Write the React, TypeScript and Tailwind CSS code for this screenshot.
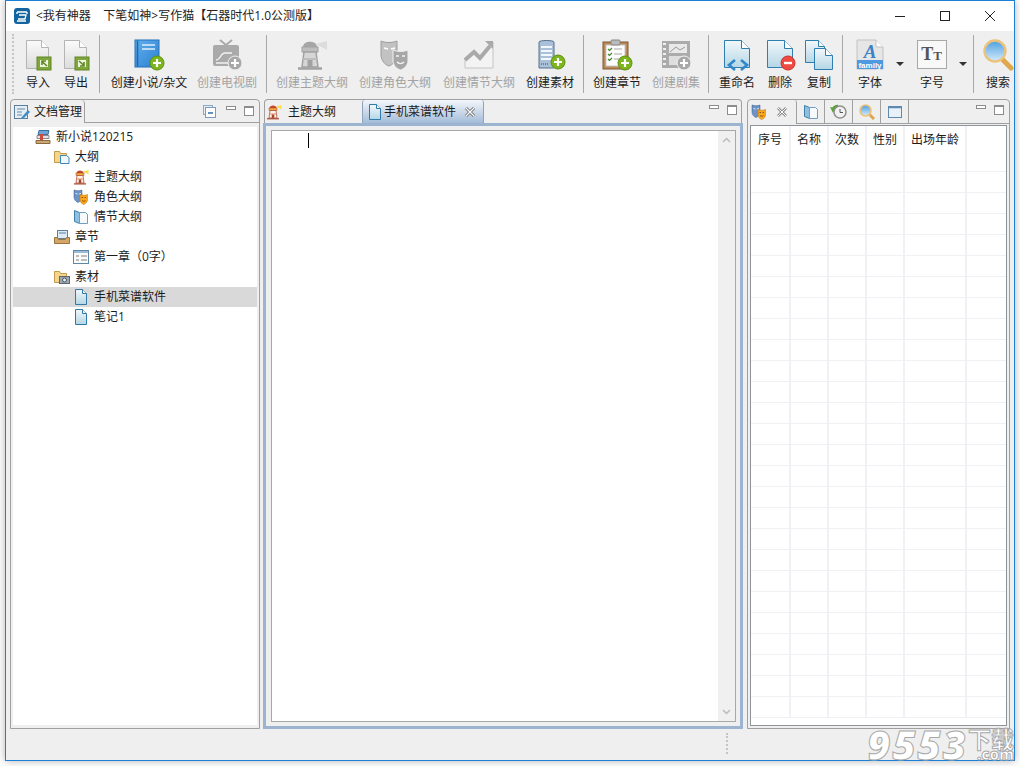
import React from "react";

const Defs = () => (
  <svg className="absolute w-0 h-0">
    <defs>
      <linearGradient id="page" x1="0" y1="0" x2="0" y2="1">
        <stop offset="0" stopColor="#fbfbfb" />
        <stop offset="1" stopColor="#dcdcdc" />
      </linearGradient>
      <linearGradient id="blueDoc" x1="0" y1="0" x2="0" y2="1">
        <stop offset="0" stopColor="#f2f8fb" />
        <stop offset="1" stopColor="#b5d6e6" />
      </linearGradient>
      <linearGradient id="book" x1="0" y1="0" x2="1" y2="1">
        <stop offset="0" stopColor="#5fb0ee" />
        <stop offset="1" stopColor="#2d7fd0" />
      </linearGradient>
      <linearGradient id="glass" x1="0" y1="0" x2="0" y2="1">
        <stop offset="0" stopColor="#4c9fe0" />
        <stop offset="1" stopColor="#d5ecfa" />
      </linearGradient>
    </defs>
  </svg>
);

const Plus = ({ x, y, gray }: { x: number; y: number; gray?: boolean }) => (
  <g>
    <circle cx={x} cy={y} r="7" fill={gray ? "#a8a8a8" : "#7db51c"} stroke={gray ? "#f0f0f0" : "#5d8f12"} />
    <path d={`M${x - 4} ${y}h8M${x} ${y - 4}v8`} stroke="#fff" strokeWidth="2.2" />
  </g>
);

const ArrowPage = ({ out }: { out?: boolean }) => (
  <svg className="w-[32px] h-[32px]" viewBox="0 0 32 32">
    <path d="M4.500 1.500h15l7 7v21h-22z" fill="url(#page)" stroke="#b4b4b4" />
    <path d="M19.500 1.500v7h7" fill="#fff" stroke="#b4b4b4" />
    <rect x="15" y="18" width="14" height="13" fill="#7fa63a" stroke="#5f8528" />
    <rect x="18" y="21" width="8" height="7" fill="#eef5dd" />
    <path d={out ? "M19 22l5 4.500M24 23v4h-4" : "M25 27l-5-4.500M20 26v-4h4"} stroke="#5f8528" strokeWidth="1.600" fill="none" />
  </svg>
);

const NewBook = () => (
  <svg className="w-[32px] h-[32px]" viewBox="0 0 32 32">
    <rect x="2" y="1" width="24" height="27" fill="url(#book)" stroke="#2470b8" />
    <path d="M4.500 1.500v26" stroke="#1f66aa" strokeWidth="1.500" />
    <path d="M9 6h13M9 10h13" stroke="#dff0fc" strokeWidth="1.500" />
    <Plus x={24} y={24} />
  </svg>
);

const Tv = () => (
  <svg className="w-[32px] h-[32px]" viewBox="0 0 32 32">
    <path d="M9 1l6 5 6-5" stroke="#a9a9a9" strokeWidth="2" fill="none" />
    <rect x="2" y="6" width="26" height="21" rx="2" fill="#aaaaaa" />
    <path d="M5 21c5 0 4-7 9-7h7M5 24h14" stroke="#f2f2f2" strokeWidth="1.300" fill="none" />
    <Plus x={24} y={24} gray />
  </svg>
);

const Lighthouse = ({ gray }: { gray?: boolean }) => {
  const body = gray ? "#d6d6d6" : "#fbf3e8";
  const line = gray ? "#a2a2a2" : "#a8482f";
  const top = gray ? "#a6a6a6" : "#c9452a";
  return (
    <svg className="w-full h-full" viewBox="0 0 32 32">
      <path d="M20 5l11-3v9z" fill={gray ? "#dcdcdc" : "#f8e04f"} />
      <path d="M7 8c0-7 14-7 14 0z" fill={top} />
      <rect x="6" y="8" width="16" height="5" fill={gray ? "#bdbdbd" : "#f2a93b"} stroke={line} />
      <path d="M8 13h12l2 15H6z" fill={body} stroke={line} strokeWidth="1.500" />
      <path d="M7 20h14" stroke={gray ? "#bdbdbd" : "#e68a6a"} strokeWidth="2" />
      <rect x="11.500" y="21" width="5" height="7" fill={line} />
      <path d="M2 29.500h24" stroke={line} strokeWidth="2.500" />
    </svg>
  );
};

const Masks = ({ gray }: { gray?: boolean }) => (
  <svg className="w-full h-full" viewBox="0 0 32 32">
    <path d="M2 2c5 2 11 2 16 0v14c0 6-5 10-8 11-4-1-8-6-8-11z" fill={gray ? "#c2c2c2" : "#6d94c8"} stroke={gray ? "#9d9d9d" : "#34588a"} />
    <path d="M5 9l4 1M12 10l4-1" stroke="#fff" strokeWidth="1.600" />
    <path d="M14 11c5 2 10 2 15 0v11c0 4-4 8-7.500 9-4-1-7.500-5-7.500-9z" fill={gray ? "#a7a7a7" : "#f9a81e"} stroke={gray ? "#f0f0f0" : "#b86f14"} />
    <path d="M17 17h3M23 17h3M18 23c2 2 5 2 7 0" stroke={gray ? "#f4f4f4" : "#70400c"} strokeWidth="1.600" fill="none" />
  </svg>
);

const Chart = () => (
  <svg className="w-[32px] h-[32px]" viewBox="0 0 32 32">
    <path d="M2 29V19l9-7 6 5L30 3v26z" fill="#f3f3f3" stroke="#c4c4c4" />
    <path d="M2 21l9-8 6 6L27 7" stroke="#a9a9a9" strokeWidth="4" fill="none" />
    <path d="M22 2h8v8z" fill="#a9a9a9" />
  </svg>
);

const Server = () => (
  <svg className="w-[32px] h-[32px]" viewBox="0 0 32 32">
    <path d="M5 3c0-2 15-2 15 0v26H5z" fill="#a9c0d8" stroke="#54708f" />
    <path d="M7 8h11M7 12h11M7 16h11M7 20h11" stroke="#f2f7fb" strokeWidth="2" />
    <path d="M7 25h8" stroke="#6d8299" strokeWidth="2" strokeDasharray="1 1" />
    <Plus x={24} y={23} />
  </svg>
);

const Clipboard = () => (
  <svg className="w-[32px] h-[32px]" viewBox="0 0 32 32">
    <rect x="2" y="3" width="25" height="27" fill="#b98958" stroke="#7f5a34" />
    <rect x="5" y="6" width="19" height="21" fill="#fdfdfd" stroke="#c9c9c9" />
    <rect x="10" y="1" width="9" height="5" rx="1" fill="#bbbbbb" stroke="#868686" />
    <path d="M7 10l1.500 1.500L11 9M7 15l1.500 1.500L11 14M7 20l1.500 1.500L11 19" stroke="#3f8a2a" fill="none" strokeWidth="1.200" />
    <path d="M13 10h8M13 15h8M13 20h5" stroke="#a7a7a7" />
    <Plus x={24} y={24} />
  </svg>
);

const Film = () => (
  <svg className="w-[32px] h-[32px]" viewBox="0 0 32 32">
    <rect x="2" y="2" width="28" height="27" fill="#ababab" />
    <path d="M3 5h3M3 10h3M3 15h3M3 20h3M3 25h3" stroke="#f0f0f0" strokeWidth="2" />
    <rect x="9" y="5" width="18" height="9" fill="#e9e9e9" />
    <rect x="9" y="17" width="18" height="9" fill="#dedede" />
    <path d="M10 13l6-5 4 3 5-3" stroke="#9a9a9a" fill="none" />
    <Plus x={24} y={24} gray />
  </svg>
);

const BlueDoc = () => (
  <>
    <path d="M3.500 1.500h17l8 8v19h-25z" fill="url(#blueDoc)" stroke="#2e7fb0" />
    <path d="M20.500 1.500v8h8" fill="#fff" stroke="#2e7fb0" />
  </>
);

const Rename = () => (
  <svg className="w-[32px] h-[32px]" viewBox="0 0 32 32">
    <BlueDoc />
    <path d="M14 21l-6 5 6 5M20 21l6 5-6 5" stroke="#2f86c8" strokeWidth="2.600" fill="none" />
  </svg>
);

const DeleteDoc = () => (
  <svg className="w-[32px] h-[32px]" viewBox="0 0 32 32">
    <BlueDoc />
    <circle cx="24" cy="24" r="7" fill="#ef4b43" stroke="#c9322b" />
    <path d="M20 24h8" stroke="#fff" strokeWidth="2.400" />
  </svg>
);

const CopyDoc = () => (
  <svg className="w-[32px] h-[32px]" viewBox="0 0 32 32">
    <path d="M2.500 1.500h13l6 6v16h-19z" fill="url(#blueDoc)" stroke="#2e7fb0" />
    <path d="M15.500 1.500v6h6" fill="#fff" stroke="#2e7fb0" />
    <path d="M11.500 9.500h11l7 7v14h-18z" fill="url(#blueDoc)" stroke="#2e7fb0" />
    <path d="M22.500 9.500v7h7" fill="#fff" stroke="#2e7fb0" />
  </svg>
);

const FontIcon = () => (
  <svg className="w-[32px] h-[32px]" viewBox="0 0 32 32">
    <path d="M3 1h19l7 7v22H3z" fill="#e6e6e6" stroke="#c2c2c2" />
    <path d="M22 1v7h7" fill="#fff" stroke="#c2c2c2" />
    <text x="16" y="19" textAnchor="middle" fontSize="19" fontWeight="700" fontStyle="italic" fontFamily="Liberation Serif" fill="#3b82c8">A</text>
    <rect x="3" y="21" width="26" height="9" fill="#4d9ae0" />
    <text x="16" y="28.500" textAnchor="middle" fontSize="8" fontWeight="700" fontFamily="Liberation Sans" fill="#fff">family</text>
  </svg>
);

const SizeIcon = () => (
  <svg className="w-[32px] h-[32px]" viewBox="0 0 32 32">
    <rect x="1.500" y="1.500" width="29" height="28" fill="#f8f8f8" stroke="#a8a8a8" />
    <text x="15.500" y="21" textAnchor="middle" fontSize="18" fontWeight="700" fontFamily="Liberation Serif" fill="#555">
      T<tspan fontSize="13">T</tspan>
    </text>
  </svg>
);

const Search = () => (
  <svg className="w-[32px] h-[32px]" viewBox="0 0 32 32">
    <path d="M20 20l9 9" stroke="#e0a84c" strokeWidth="5" strokeLinecap="round" />
    <circle cx="13" cy="12" r="10.500" fill="url(#glass)" stroke="#edc27a" strokeWidth="2.400" />
  </svg>
);

const tools = [
  { w: "w-[38px]", label: "导入", icon: <ArrowPage /> },
  { w: "w-[38px]", label: "导出", icon: <ArrowPage out /> },
  { sep: "w-[8px]" },
  { w: "w-[92px]", label: "创建小说/杂文", icon: <NewBook /> },
  { w: "w-[64px]", label: "创建电视剧", icon: <Tv />, off: true },
  { sep: "w-[14px]" },
  { w: "w-[78px]", label: "创建主题大纲", icon: <div className="w-[32px] h-[32px]"><Lighthouse gray /></div>, off: true },
  { w: "w-[88px]", label: "创建角色大纲", icon: <div className="w-[32px] h-[32px]"><Masks gray /></div>, off: true },
  { w: "w-[80px]", label: "创建情节大纲", icon: <Chart />, off: true },
  { w: "w-[62px]", label: "创建素材", icon: <Server /> },
  { sep: "w-[4px]" },
  { w: "w-[64px]", label: "创建章节", icon: <Clipboard /> },
  { w: "w-[54px]", label: "创建剧集", icon: <Film />, off: true },
  { sep: "w-[10px]" },
  { w: "w-[48px]", label: "重命名", icon: <Rename /> },
  { w: "w-[38px]", label: "删除", icon: <DeleteDoc /> },
  { w: "w-[40px]", label: "复制", icon: <CopyDoc /> },
  { sep: "w-[6px]" },
  { w: "w-[50px]", label: "字体", icon: <FontIcon /> },
  { caret: "w-[10px]" },
  { w: "w-[54px]", label: "字号", icon: <SizeIcon /> },
  { caret: "w-[8px]" },
  { sep: "w-[12px]" },
  { w: "w-[38px]", label: "搜索", icon: <Search /> },
];

const Toolbar = () => (
  <div className="h-[66px] bg-[#efefef] flex overflow-hidden shrink-0">
    <div className="w-[13px] shrink-0 pl-[6px] py-[3px]">
      <div className="h-full border-l-2 border-dotted border-[#c4c4c4]" />
    </div>
    {tools.map((t, i) => {
      if (t.sep) {
        return (
          <div key={i} className={`${t.sep} shrink-0 flex justify-center py-[4px]`}>
            <div className="w-px bg-[#a8a8a8]" />
          </div>
        );
      }
      if (t.caret) {
        return (
          <div key={i} className={`${t.caret} shrink-0 flex justify-center pt-[31px]`}>
            <div className="w-0 h-0 border-x-[4px] border-x-transparent border-t-[4px] border-t-[#333]" />
          </div>
        );
      }
      return (
        <div key={i} className={`${t.w} shrink-0 flex flex-col items-center pt-[8px]`}>
          <div className="h-[32px] flex justify-center">{t.icon}</div>
          <div className={`mt-[4px] text-[12px] leading-[16px] whitespace-nowrap ${t.off ? "text-[#a3a3a3]" : "text-[#1c1c1c]"}`}>{t.label}</div>
        </div>
      );
    })}
  </div>
);

const MinMax = () => (
  <div className="flex items-start gap-[8px]">
    <div className="w-[10px] h-[4px] border border-[#8c8c8c] bg-white mt-[1px]" />
    <div className="w-[10px] h-[10px] border border-[#8c8c8c] border-t-2 bg-white mt-[1px]" />
  </div>
);

const SmallDoc = () => (
  <svg className="w-[16px] h-[16px]" viewBox="0 0 16 16">
    <path d="M2.500 .5h7l4 4v11h-11z" fill="url(#blueDoc)" stroke="#2f7aa8" />
    <path d="M9.500 .5v4h4" fill="#fff" stroke="#2f7aa8" />
  </svg>
);

const SmallBook = () => (
  <svg className="w-[16px] h-[16px]" viewBox="0 0 16 16">
    <path d="M1.500 1.500l5 2v11l-5-2z" fill="#8fc0e2" stroke="#3f7fab" />
    <path d="M6.500 3.500h6l2 2v9h-8z" fill="#f6fafc" stroke="#6e9fc0" />
  </svg>
);

const RootIcon = () => (
  <svg className="w-[16px] h-[16px]" viewBox="0 0 16 16">
    <path d="M4 1.500h10l-1 4H3z" fill="#6ea3d6" stroke="#3b6f9f" />
    <path d="M2 6.500h12v3H2z" fill="#e4e4e4" stroke="#8a8a8a" />
    <rect x="5" y="5" width="3" height="6" fill="#cf4a3a" />
    <path d="M1 11.500h14v3H1z" fill="#c9a777" stroke="#8a6a3d" />
  </svg>
);

const FolderDoc = () => (
  <svg className="w-[16px] h-[16px]" viewBox="0 0 16 16">
    <path d="M.5 2.500h5l1 2h6v9H.5z" fill="#f5d58a" stroke="#c39a4a" />
    <path d="M6.500 6.500h6l2.500 2v6h-8.500z" fill="#eef7fc" stroke="#3f86b5" />
  </svg>
);

const Tray = () => (
  <svg className="w-[16px] h-[16px]" viewBox="0 0 16 16">
    <rect x="3.500" y="1.500" width="10" height="8" fill="#dbeaf5" stroke="#5b7f9c" />
    <path d="M5 4h7" stroke="#5b7f9c" />
    <path d="M.5 8.500h3l1 2h7l1-2h3v6H.5z" fill="#d4a768" stroke="#9b7540" />
  </svg>
);

const Form = () => (
  <svg className="w-[16px] h-[16px]" viewBox="0 0 16 16">
    <rect x=".5" y="1.500" width="15" height="13" fill="#fafafa" stroke="#5f87a8" />
    <path d="M1 3h14" stroke="#9dbdd6" strokeWidth="2" />
    <path d="M3 7h3M8 7h6M3 11h3M8 11h6" stroke="#a8a8a8" strokeWidth="1.400" />
  </svg>
);

const FolderCam = () => (
  <svg className="w-[16px] h-[16px]" viewBox="0 0 16 16">
    <path d="M.5 2.500h5l1 2h6v9H.5z" fill="#f5d58a" stroke="#c39a4a" />
    <rect x="5.500" y="7.500" width="10" height="7" fill="#9fa8b0" stroke="#5d666e" />
    <circle cx="10.500" cy="11" r="2" fill="#dff0fa" stroke="#4a5258" />
  </svg>
);

const tree = [
  { pl: "pl-[22px]", icon: <RootIcon />, text: "新小说120215" },
  { pl: "pl-[41px]", icon: <FolderDoc />, text: "大纲" },
  { pl: "pl-[60px]", icon: <div className="w-[16px] h-[16px]"><Lighthouse /></div>, text: "主题大纲" },
  { pl: "pl-[60px]", icon: <div className="w-[16px] h-[16px]"><Masks /></div>, text: "角色大纲" },
  { pl: "pl-[60px]", icon: <SmallBook />, text: "情节大纲" },
  { pl: "pl-[41px]", icon: <Tray />, text: "章节" },
  { pl: "pl-[60px]", icon: <Form />, text: "第一章（0字）" },
  { pl: "pl-[41px]", icon: <FolderCam />, text: "素材" },
  { pl: "pl-[60px]", icon: <SmallDoc />, text: "手机菜谱软件", selected: true },
  { pl: "pl-[60px]", icon: <SmallDoc />, text: "笔记1" },
];

const LeftPanel = () => (
  <section className="w-[250px] h-[630px] border border-[#a0a0a0] rounded-t-[4px] flex flex-col bg-[#efefef] overflow-hidden">
    <div className="h-[23px] flex shrink-0">
      <div className="w-[74px] border-r border-[#a0a0a0] rounded-tr-[4px] flex items-center pl-[3px] gap-[4px] text-[12px] text-[#1c1c1c]">
        <svg className="w-[16px] h-[16px]" viewBox="0 0 16 16">
          <rect x=".5" y="1.500" width="13" height="13" fill="#e4eef6" stroke="#5b7f9c" />
          <path d="M3 5h8M3 8h5M3 11h5" stroke="#6b8ba5" />
          <path d="M7 14l7-8 2 2-7 7z" fill="#3f8ec9" />
        </svg>
        文档管理
      </div>
      <div className="flex-1 border-b border-[#a0a0a0] flex items-start justify-end pt-[5px] pr-[5px] gap-[10px]">
        <svg className="w-[13px] h-[13px]" viewBox="0 0 13 13">
          <rect x=".5" y=".5" width="9" height="9" fill="#e6eff7" stroke="#8ca8c2" />
          <rect x="2.500" y="2.500" width="10" height="10" fill="#fff" stroke="#7a9cbc" />
          <path d="M5 8h5" stroke="#2f6ea8" strokeWidth="1.400" />
        </svg>
        <MinMax />
      </div>
    </div>
    <div className="flex-1 min-h-0 pt-[4px] pb-[3px] px-[2px]">
      <div className="h-full bg-white">
        {tree.map((n) => (
          <div key={n.text} className={`h-[20px] flex items-center gap-[5px] text-[12px] text-[#1c1c1c] ${n.pl} ${n.selected ? "bg-[#d9d9d9]" : ""}`}>
            <div className="w-[16px] h-[16px] shrink-0">{n.icon}</div>
            <span>{n.text}</span>
          </div>
        ))}
      </div>
    </div>
  </section>
);

const CenterPanel = () => (
  <section className="w-[480px] h-[630px] flex flex-col">
    <div className="h-[24px] mx-px border-t border-x border-[#a0a0a0] rounded-t-[4px] flex shrink-0 bg-[#efefef]">
      <div className="w-[81px] flex items-center pl-[1px] gap-[6px] text-[12px] text-[#1c1c1c]">
        <div className="w-[16px] h-[16px]"><Lighthouse /></div>
        主题大纲
      </div>
      <div className="w-[122px] ml-[16px] bg-gradient-to-b from-[#f4f7fb] to-[#a4bcd9] border-x border-[#8ea3bd] rounded-t-[3px] flex items-center pl-[4px] text-[12px] text-[#1c1c1c]">
        <div className="w-[14px] h-[16px] mr-[3px]"><SmallDoc /></div>
        手机菜谱软件
        <svg className="w-[12px] h-[12px] ml-[8px]" viewBox="0 0 12 12">
          <path d="M2 2l8 8M10 2l-8 8" stroke="#6a6a6a" strokeWidth="3" />
          <path d="M2 2l8 8M10 2l-8 8" stroke="#fff" strokeWidth="1.200" />
        </svg>
      </div>
      <div className="flex-1 flex items-start justify-end pt-[4px] pr-[4px]">
        <MinMax />
      </div>
    </div>
    <div className="h-[606px] border-[3px] border-[#9db4d0] bg-[#efefef] pt-[4px] pr-[4px] pb-[4px] pl-[5px]">
      <div className="h-full border border-[#a8a8a8] bg-white flex">
        <div className="flex-1 pl-[36px] pt-[2px]">
          <div className="w-px h-[15px] bg-black" />
        </div>
        <div className="w-[17px] bg-[#f0f0f0] flex flex-col justify-between items-center py-[6px]">
          <svg className="w-[9px] h-[6px]" viewBox="0 0 9 6">
            <path d="M1 5l3.500-3.500L8 5" stroke="#bcbcbc" strokeWidth="1.500" fill="none" />
          </svg>
          <svg className="w-[9px] h-[6px]" viewBox="0 0 9 6">
            <path d="M1 1l3.500 3.500L8 1" stroke="#bcbcbc" strokeWidth="1.500" fill="none" />
          </svg>
        </div>
      </div>
    </div>
  </section>
);

const cols = ["w-[40px]", "w-[38px]", "w-[38px]", "w-[38px]", "w-[62px]"];
const heads = ["序号", "名称", "次数", "性别", "出场年龄"];
const rows = Array.from({ length: 27 }, (_, i) => i);

const tabIcons = [
  <SmallBook />,
  <svg className="w-[18px] h-[16px]" viewBox="0 0 18 16">
    <path d="M3 5a6 6 0 0 1 5-3" stroke="#4f9a2c" strokeWidth="2.500" fill="none" />
    <path d="M0 3l6 1-3 5z" fill="#5aa534" />
    <circle cx="10" cy="8" r="6" fill="#f2f2f2" stroke="#8f8f8f" strokeWidth="1.500" />
    <path d="M10 5v3.500h3" stroke="#555" fill="none" />
  </svg>,
  <svg className="w-[16px] h-[16px]" viewBox="0 0 16 16">
    <path d="M10 10l5 5" stroke="#e0a84c" strokeWidth="3" />
    <circle cx="6.500" cy="6.500" r="5.500" fill="url(#glass)" stroke="#edc27a" strokeWidth="1.500" />
  </svg>,
  <svg className="w-[14px] h-[14px]" viewBox="0 0 14 14">
    <rect x=".5" y="1.500" width="13" height="11" fill="#e8f1f8" stroke="#5d8ab0" />
    <path d="M1 2.500h12" stroke="#5d8ab0" strokeWidth="1.500" />
  </svg>,
];

const RightPanel = () => (
  <section className="w-[263px] h-[630px] border border-[#a0a0a0] rounded-t-[4px] bg-[#efefef] flex flex-col">
    <div className="h-[24px] flex shrink-0">
      <div className="w-[49px] border-r border-[#a0a0a0] rounded-tr-[3px] flex items-center pl-[3px] gap-[10px]">
        <div className="w-[16px] h-[16px]"><Masks /></div>
        <svg className="w-[10px] h-[10px]" viewBox="0 0 10 10">
          <path d="M1 1l8 8M9 1l-8 8" stroke="#8a8a8a" strokeWidth="2.600" />
          <path d="M1 1l8 8M9 1l-8 8" stroke="#fff" strokeWidth="1" />
        </svg>
      </div>
      {tabIcons.map((ic, i) => (
        <div key={i} className="w-[28px] border-r border-b border-[#a0a0a0] flex items-center justify-center">{ic}</div>
      ))}
      <div className="flex-1 border-b border-[#a0a0a0] flex items-start justify-end pt-[4px] pr-[5px]">
        <MinMax />
      </div>
    </div>
    <div className="flex-1 min-h-0 pt-px pb-[2px] px-[2px]">
      <div className="h-full border border-[#8f9499] bg-white overflow-hidden">
        <div className="h-[25px] flex text-[12px] text-[#1c1c1c]">
          {heads.map((h, i) => (
            <div key={h} className={`${cols[i]} shrink-0 border-r-2 border-[#eff1f5] flex items-center justify-center pt-[2px]`}>{h}</div>
          ))}
        </div>
        {rows.map((r) => (
          <div key={r} className="h-[21px] flex border-b border-[#eff1f5]">
            {cols.map((c, i) => (
              <div key={i} className={`${c} shrink-0 border-r-2 border-[#eff1f5]`} />
            ))}
          </div>
        ))}
      </div>
    </div>
  </section>
);

export default function App() {
  return (
    <div className="w-[1020px] h-[766px] bg-white overflow-hidden font-['Open_Sans','Noto_Sans_CJK_SC',sans-serif]">
      <Defs />
      <div className="ml-[5px] w-[1010px] h-[761px] border border-[#1a80d8] bg-white flex flex-col shadow-[0_0_8px_rgba(0,0,0,0.3)]">
        <div className="h-[30px] flex items-center shrink-0 relative">
          <svg className="w-[16px] h-[16px] ml-[8px] mr-[6px]" viewBox="0 0 16 16">
            <rect width="16" height="16" rx="3" fill="#14649f" />
            <path d="M3 4h10M3 4v2M13 4v2M5 7h7l-1 4H4M3 13h9" stroke="#fff" strokeWidth="1.300" fill="none" />
          </svg>
          <span className="text-[12px] text-[#222] whitespace-pre">{"<我有神器    下笔如神>写作猫【石器时代1.0公测版】"}</span>
          <div className="ml-auto flex items-center">
            <div className="w-[45px] flex justify-center"><div className="w-[10px] h-px bg-[#222]" /></div>
            <div className="w-[45px] flex justify-center"><div className="w-[10px] h-[10px] border border-[#222]" /></div>
            <div className="w-[45px] flex justify-center mr-[2px]">
              <svg className="w-[12px] h-[12px]" viewBox="0 0 12 12">
                <path d="M1 1l10 10M11 1L1 11" stroke="#222" />
              </svg>
            </div>
          </div>
        </div>
        <Toolbar />
        <div className="h-[632px] shrink-0 bg-[#efefef] flex pl-[4px] pt-[2px]">
          <LeftPanel />
          <div className="w-[3px]" />
          <CenterPanel />
          <div className="w-[4px]" />
          <RightPanel />
        </div>
        <div className="flex-1 bg-[#efefef] relative pl-[720px] pt-[4px]">
          <div className="h-[21px] border-l-2 border-dotted border-[#c4c4c4]" />
          <div className="absolute right-0 bottom-0 flex items-end text-white [-webkit-text-stroke:1px_#a8a8a8]">
            <span className="text-[40px] leading-[31px] font-extrabold italic tracking-[2px]">9553</span>
            <div className="flex flex-col items-end">
              <span className="text-[23px] leading-[20px] font-bold">下载</span>
              <span className="text-[15px] leading-[11px] font-extrabold">.com</span>
            </div>
          </div>
        </div>
      </div>
    </div>
  );
}
